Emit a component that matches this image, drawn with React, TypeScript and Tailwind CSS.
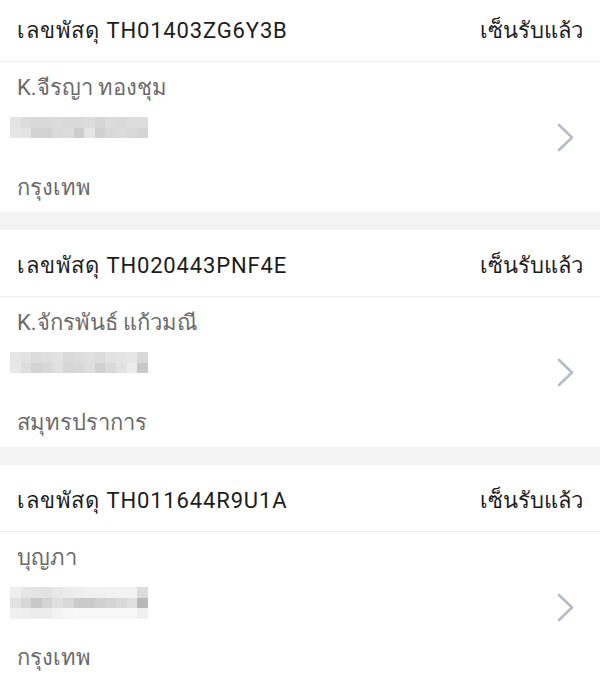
import React from "react";

type Item = {
  id: string;
  name: string;
  city: string;
  rows: string[][];
};

const items: Item[] = [
  {
    id: "TH01403ZG6Y3B",
    name: "K.จีรญา ทองชุม",
    city: "กรุงเทพ",
    rows: [
      ["bg-[#e4e4e4]", "bg-[#dcdcdc]", "bg-[#d9d9d9]", "bg-[#d9d9d9]", "bg-[#dcdcdc]", "bg-[#d9d9d9]", "bg-[#d9d9d9]", "bg-[#dddddd]", "bg-[#d6d6d6]", "bg-[#dcdcdc]", "bg-[#d9d9d9]", "bg-[#dddddd]", "bg-[#dddddd]"],
      ["bg-[#e6e6e6]", "bg-[#e4e4e4]", "bg-[#d2d2d2]", "bg-[#d2d2d2]", "bg-[#dadada]", "bg-[#dcdcdc]", "bg-[#cdcdcd]", "bg-[#e4e4e4]", "bg-[#d0d0d0]", "bg-[#d8d8d8]", "bg-[#dcdcdc]", "bg-[#d8d8d8]", "bg-[#d4d4d4]"],
    ],
  },
  {
    id: "TH020443PNF4E",
    name: "K.จักรพันธ์ แก้วมณี",
    city: "สมุทรปราการ",
    rows: [
      ["bg-[#e6e6e6]", "bg-[#e2e2e2]", "bg-[#dcdcdc]", "bg-[#dedede]", "bg-[#e2e2e2]", "bg-[#dadada]", "bg-[#dcdcdc]", "bg-[#e0e0e0]", "bg-[#dcdcdc]", "bg-[#e2e2e2]", "bg-[#e4e4e4]", "bg-[#e6e6e6]", "bg-[#d8d8d8]"],
      ["bg-[#e8e8e8]", "bg-[#dedede]", "bg-[#d4d4d4]", "bg-[#d8d8d8]", "bg-[#e0e0e0]", "bg-[#d6d6d6]", "bg-[#d8d8d8]", "bg-[#dedede]", "bg-[#d0d0d0]", "bg-[#dadada]", "bg-[#e2e2e2]", "bg-[#ececec]", "bg-[#c8c8c8]"],
    ],
  },
  {
    id: "TH011644R9U1A",
    name: "บุญภา",
    city: "กรุงเทพ",
    rows: [
      ["bg-[#eeeeee]", "bg-[#e6e6e6]", "bg-[#e4e4e4]", "bg-[#e2e2e2]", "bg-[#e8e8e8]", "bg-[#ececec]", "bg-[#eeeeee]", "bg-[#f0f0f0]", "bg-[#f0f0f0]", "bg-[#f2f2f2]", "bg-[#f2f2f2]", "bg-[#f2f2f2]", "bg-[#dcdcdc]"],
      ["bg-[#e2e2e2]", "bg-[#d8d8d8]", "bg-[#c8c8c8]", "bg-[#d4d4d4]", "bg-[#e0e0e0]", "bg-[#d8d8d8]", "bg-[#cacaca]", "bg-[#cacaca]", "bg-[#d0d0d0]", "bg-[#d4d4d4]", "bg-[#dadada]", "bg-[#e0e0e0]", "bg-[#b8b8b8]"],
      ["bg-[#f0f0f0]", "bg-[#eeeeee]", "bg-[#ececec]", "bg-[#ececec]", "bg-[#f2f2f2]", "bg-[#f6f6f6]", "bg-[#f8f8f8]", "bg-[#f8f8f8]", "bg-[#f8f8f8]", "bg-[#f8f8f8]", "bg-[#f8f8f8]", "bg-[#f8f8f8]", "bg-[#f0f0f0]"],
    ],
  },
];

function Mosaic({ rows }: { rows: string[][] }) {
  return (
    <div className="flex flex-col w-[138px] ml-[-7px]">
      {rows.map((r, i) => (
        <div key={i} className="flex h-[10.5px]">
          {r.map((c, j) => (
            <div key={j} className={`flex-1 ${c}`} />
          ))}
        </div>
      ))}
    </div>
  );
}

function Chevron() {
  return (
    <svg width="17" height="29" viewBox="0 0 17 29" fill="none">
      <polyline
        points="2,2 15,14.5 2,27"
        stroke="#b4bdc5"
        strokeWidth="2.6"
        strokeLinecap="round"
        strokeLinejoin="round"
      />
    </svg>
  );
}

function Card({ item }: { item: Item }) {
  return (
    <div className="bg-white">
      <div className="h-[67px] flex items-center justify-between px-[17px] pt-[5px] border-b border-[#ececec]">
        <span className="text-[22px] tracking-[0.85px] text-[#1c1c1c]">เลขพัสดุ {item.id}</span>
        <span className="text-[22px] text-[#1c1c1c]">เซ็นรับแล้ว</span>
      </div>
      <div className="h-[150px] flex items-center justify-between pl-[17px] pr-[26px]">
        <div className="flex flex-col h-full pt-[11px]">
          <div className="text-[22px] leading-[30px] text-[#6a6a6a]">{item.name}</div>
          <div className="mt-[14px] h-[32px]">
            <Mosaic rows={item.rows} />
          </div>
          <div className="mt-[24px] text-[22px] leading-[30px] text-[#6a6a6a]">{item.city}</div>
        </div>
        <Chevron />
      </div>
    </div>
  );
}

export default function App() {
  return (
    <div
      className="w-[600px] h-[682px] overflow-hidden bg-[#f3f3f3]"
      style={{ fontFamily: "Roboto, 'Noto Sans', sans-serif" }}
    >
      <div className="-mt-[5px] flex flex-col gap-[18px]">
        {items.map((it) => (
          <Card key={it.id} item={it} />
        ))}
      </div>
    </div>
  );
}
